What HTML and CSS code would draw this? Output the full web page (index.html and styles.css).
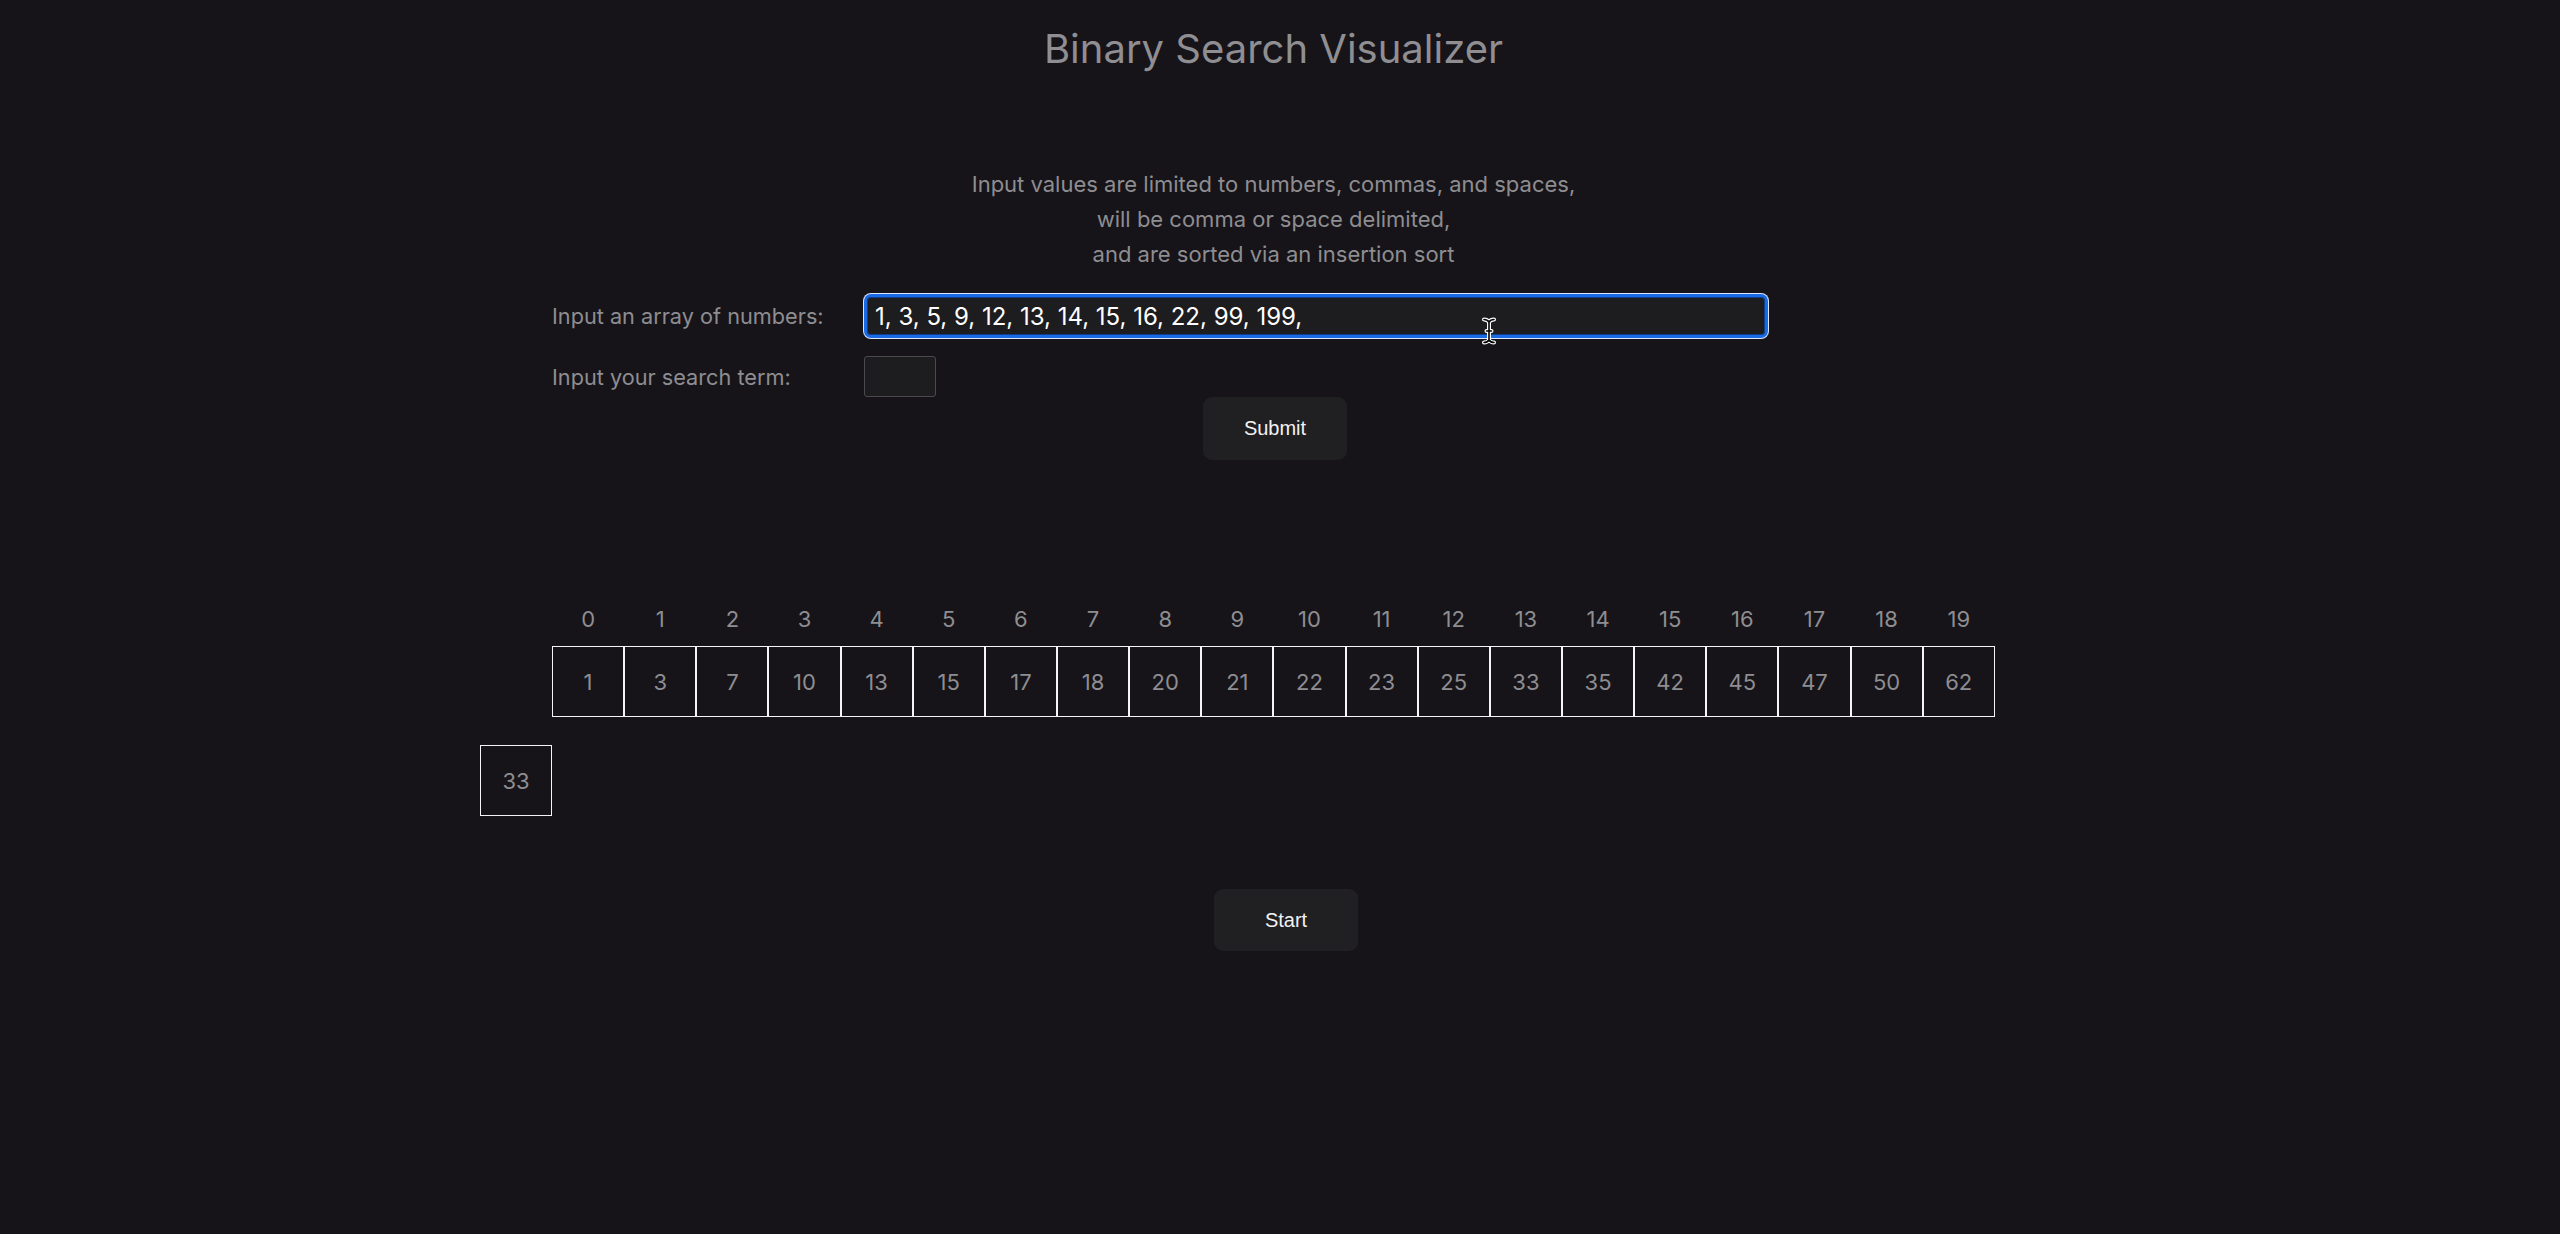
FILE: index.html
```html
<!DOCTYPE html>
<html lang="en">
<head>
<meta charset="utf-8">
<title>Binary Search Visualizer</title>
<link rel="stylesheet" href="styles.css">
</head>
<body>
<main class="app">
  <h1 class="title">Binary Search Visualizer</h1>
  <p class="note">Input values are limited to numbers, commas, and spaces,<br>will be comma or space delimited,<br>and are sorted via an insertion sort</p>
  <form class="form">
    <div class="field field-array">
      <label class="label" for="arr">Input an array of numbers:</label>
      <div class="input-wrap">
        <input id="arr" class="input array-input" type="text" value="1, 3, 5, 9, 12, 13, 14, 15, 16, 22, 99, 199,">
        <svg class="ibeam" width="14" height="28" viewBox="0 0 14 28" aria-hidden="true">
          <path d="M2 2.5 C4.5 2.5 6 3.5 7 5 C8 3.5 9.5 2.5 12 2.5 M7 5 V23 M2 25.5 C4.5 25.5 6 24.5 7 23 C8 24.5 9.5 25.5 12 25.5 M4.5 14 H9.5" fill="none" stroke="#fff" stroke-width="4" stroke-linecap="round"/>
          <path d="M2 2.5 C4.5 2.5 6 3.5 7 5 C8 3.5 9.5 2.5 12 2.5 M7 5 V23 M2 25.5 C4.5 25.5 6 24.5 7 23 C8 24.5 9.5 25.5 12 25.5 M4.5 14 H9.5" fill="none" stroke="#000" stroke-width="1.6" stroke-linecap="round"/>
        </svg>
      </div>
    </div>
    <div class="field field-term">
      <label class="label" for="term">Input your search term:</label>
      <input id="term" class="input term-input" type="text">
    </div>
    <div class="submit-row"><button type="button" class="btn">Submit</button></div>
  </form>
  <section class="viz">
    <div class="indices">
      <span>0</span><span>1</span><span>2</span><span>3</span><span>4</span><span>5</span><span>6</span><span>7</span><span>8</span><span>9</span><span>10</span><span>11</span><span>12</span><span>13</span><span>14</span><span>15</span><span>16</span><span>17</span><span>18</span><span>19</span>
    </div>
    <div class="cells">
      <div class="cell">1</div><div class="cell">3</div><div class="cell">7</div><div class="cell">10</div><div class="cell">13</div><div class="cell">15</div><div class="cell">17</div><div class="cell">18</div><div class="cell">20</div><div class="cell">21</div><div class="cell">22</div><div class="cell">23</div><div class="cell">25</div><div class="cell">33</div><div class="cell">35</div><div class="cell">42</div><div class="cell">45</div><div class="cell">47</div><div class="cell">50</div><div class="cell">62</div>
    </div>
    <div class="target-row"><div class="cell target">33</div></div>
  </section>
  <div class="start-row"><button type="button" class="btn btn-start">Start</button></div>
</main>
</body>
</html>
```
FILE: styles.css
```css
html, body {
  margin: 0;
  padding: 0;
  background: #161418;
}
body {
  font-family: Inter, "Noto Sans", sans-serif;
  color: #8e8d91;
}
.app {
  width: 1443px;
  margin-left: 552px;
  padding-top: 27px;
  padding-bottom: 100px;
}
.title {
  margin: 0;
  font-size: 40px;
  line-height: 44px;
  font-weight: 400;
  text-align: center;
  color: #8f8e92;
}
.note {
  margin: 96px 0 0;
  font-size: 22px;
  line-height: 35px;
  text-align: center;
  color: #8e8d91;
}
.form {
  margin-top: 22px;
  display: flex;
  flex-direction: column;
}
.field {
  display: grid;
  grid-template-columns: 312px auto;
  align-items: center;
}
.field-array { height: 44px; }
.field-term { height: 41px; margin-top: 18px; }
.label {
  font-size: 21.7px;
  color: #8e8d91;
}
.input-wrap {
  position: relative;
  width: 904px;
  height: 44px;
}
.input {
  box-sizing: border-box;
  background: #1d1c1f;
  color: #fff;
  font-family: Inter, "Noto Sans", sans-serif;
  margin: 0;
}
.array-input {
  width: 904px;
  height: 44px;
  padding: 0 8px;
  font-size: 24px;
  border: 3px solid #1a6ae6;
  border-radius: 7px;
  box-shadow: 0 0 0 1px #d9e6fb, inset 0 0 0 1px #0d3f8f;
  outline: none;
}
.ibeam {
  position: absolute;
  left: 618px;
  top: 23px;
}
.term-input {
  width: 72px;
  height: 41px;
  border: 1px solid #4a494d;
  border-radius: 3px;
  outline: none;
}
.submit-row {
  display: flex;
  justify-content: center;
  padding-left: 3px;
}
.btn {
  width: 144px;
  height: 63px;
  border: 0;
  border-radius: 9px;
  background: #201f22;
  color: #f2f2f2;
  font-family: "Liberation Sans", Arial, sans-serif;
  font-size: 20px;
  padding: 0;
}
.viz {
  margin-top: 145px;
}
.indices {
  display: flex;
  height: 28px;
  line-height: 28px;
}
.indices span {
  width: 72.15px;
  text-align: center;
  font-size: 22px;
  color: #8e8d91;
}
.cells {
  display: flex;
  margin-top: 13px;
}
.cell {
  box-sizing: border-box;
  width: 72.15px;
  height: 71px;
  border: 1px solid #f4f4f4;
  display: flex;
  align-items: center;
  justify-content: center;
  font-size: 22px;
  color: #8e8d91;
}
.target-row {
  display: flex;
  margin-top: 28px;
  margin-left: -72px;
}
.start-row {
  display: flex;
  justify-content: center;
  margin-top: 73px;
  padding-left: 25px;
}
.btn-start {
  height: 62px;
}
```
